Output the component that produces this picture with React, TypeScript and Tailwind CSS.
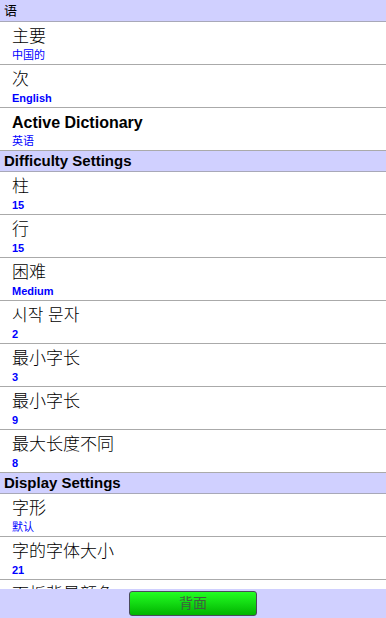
import React from 'react';

interface Item {
  title: string;
  value: string;
  bold?: boolean;
}

const cjk = "font-['Liberation_Sans','Noto_Sans_CJK_SC','Noto_Sans_CJK_KR',sans-serif]";

// latin values are bold in the original, CJK ones are regular
const isLatin = (s: string) => /^[\x00-\x7f]+$/.test(s);

const SectionHeader: React.FC<{ label: string; bold?: boolean; first?: boolean }> = ({ label, bold, first }) => (
  <div
    className={`${first ? 'h-[22px]' : 'h-[21px]'} bg-[#d0d0ff] border-b border-[#a8a8b8] pl-1 flex items-center text-black ${
      bold ? 'text-[15px] font-bold' : 'text-[13px]'
    }`}
  >
    {label}
  </div>
);

const SettingRow: React.FC<{ item: Item }> = ({ item }) => (
  <div className="h-[43px] border-b border-[#aaaaaa] bg-white pl-3 pt-[4px] flex flex-col">
    <span
      className={`leading-[22px] text-black ${
        item.bold ? 'text-[16px] font-bold' : 'text-[17px] font-light'
      }`}
    >
      {item.title}
    </span>
    <span
      className={`text-[11px] leading-[14px] text-[#0000ff] ${isLatin(item.value) ? 'font-bold' : 'font-normal'}`}
    >
      {item.value}
    </span>
  </div>
);

const language: Item[] = [
  { title: '主要', value: '中国的' },
  { title: '次', value: 'English' },
  { title: 'Active Dictionary', value: '英语', bold: true },
];

const difficulty: Item[] = [
  { title: '柱', value: '15' },
  { title: '行', value: '15' },
  { title: '困难', value: 'Medium' },
  { title: '시작 문자', value: '2' },
  { title: '最小字长', value: '3' },
  { title: '最小字长', value: '9' },
  { title: '最大长度不同', value: '8' },
];

const display: Item[] = [
  { title: '字形', value: '默认' },
  { title: '字的字体大小', value: '21' },
  { title: '面板背景颜色', value: '白色' },
];

export default function App() {
  return (
    <div className={`${cjk} w-[386px] h-[618px] overflow-hidden relative bg-white`}>
      <SectionHeader label="语" first />
      {language.map((it, i) => (
        <SettingRow key={`l${i}`} item={it} />
      ))}
      <SectionHeader label="Difficulty Settings" bold />
      {difficulty.map((it, i) => (
        <SettingRow key={`d${i}`} item={it} />
      ))}
      <SectionHeader label="Display Settings" bold />
      {display.map((it, i) => (
        <SettingRow key={`s${i}`} item={it} />
      ))}

      <div className="absolute left-0 right-0 bottom-0 h-[29px] bg-[#d0d0ff] flex justify-center pt-[2px]">
        <button className="w-[128px] h-[25px] rounded-[3px] border border-[#4a4a5a] bg-gradient-to-b from-[#22ff22] to-[#00b400] text-[14px] text-[#3f5f3f] flex items-center justify-center">
          背面
        </button>
      </div>
    </div>
  );
}
